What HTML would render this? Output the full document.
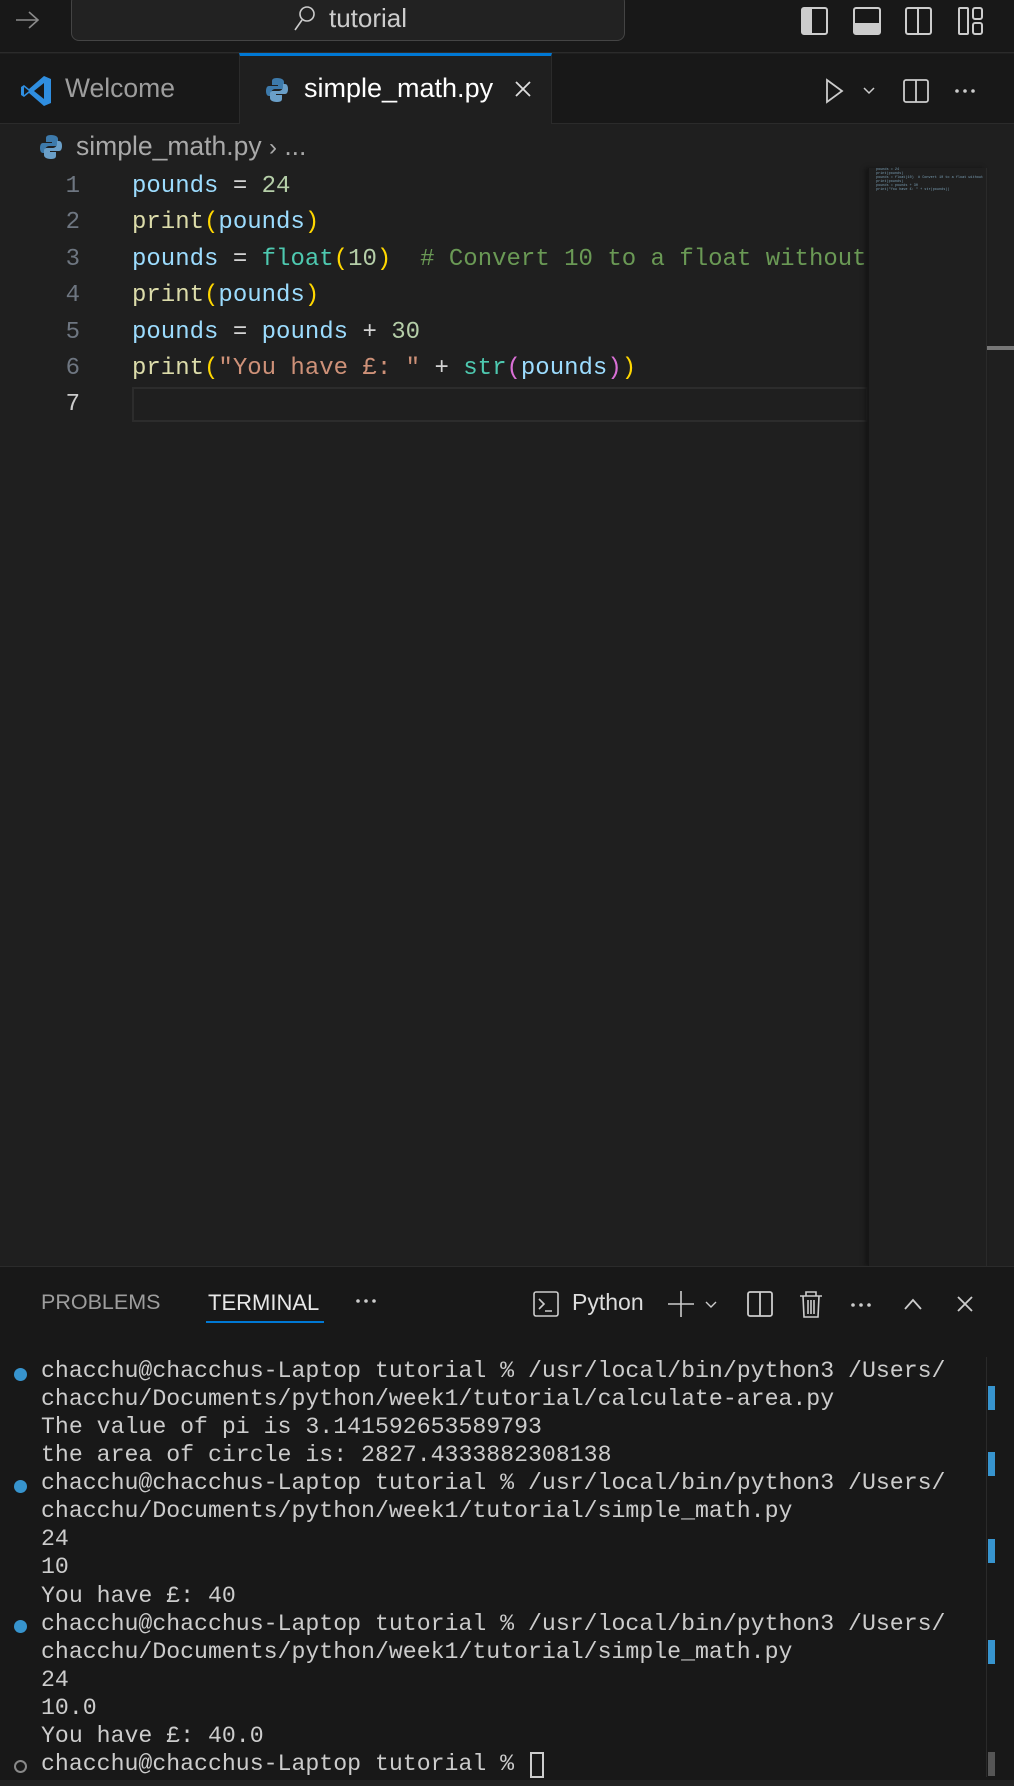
<!DOCTYPE html>
<html><head><meta charset="utf-8"><style>
*{margin:0;padding:0;box-sizing:border-box}
body{width:1014px;height:1786px;background:#1f1f1f;overflow:hidden;position:relative;font-family:"Liberation Sans",sans-serif;color:#ccc}
.abs{position:absolute}
.mono{font-family:"Liberation Mono",monospace}
.code{position:absolute;left:132px;font-size:24px;line-height:36.4px;white-space:pre;color:#9cdcfe}
.ln{position:absolute;left:40px;width:40px;text-align:right;font-size:24px;line-height:36.4px;color:#6e7681}
.v{color:#9cdcfe}.f{color:#dcdcaa}.n{color:#b5cea8}.c{color:#6a9955}.s{color:#ce9178}.b{color:#4ec9b0}.p1{color:#ffd700}.p2{color:#da70d6}.w{color:#d4d4d4}
.term{position:absolute;left:41px;top:1357px;font-size:23.2px;line-height:28.07px;white-space:pre;color:#cccccc}
.dot{position:absolute;left:14px;width:13px;height:13px;border-radius:50%;background:#3794ce}
</style></head><body>
<!-- title bar -->
<div class="abs" style="left:0;top:0;width:1014px;height:53px;background:#181818;border-bottom:1px solid #2b2b2b"></div>
<svg class="abs" style="left:14px;top:8px" width="28" height="24" viewBox="0 0 28 24"><path d="M2 12h22M15 4l9 8-9 8" stroke="#8a8a8a" stroke-width="1.6" fill="none"/></svg>
<div class="abs" style="left:71px;top:-6px;width:554px;height:47px;border:1.5px solid #444;border-radius:8px;background:#222"></div>
<svg class="abs" style="left:292px;top:4px" width="26" height="28" viewBox="0 0 26 28"><circle cx="15" cy="10" r="7" stroke="#ccc" stroke-width="1.6" fill="none"/><path d="M10 16 3 26" stroke="#ccc" stroke-width="1.6"/></svg>
<div class="abs" style="left:329px;top:3px;font-size:26px;color:#ccc">tutorial</div>
<svg class="abs" style="left:800px;top:6px" width="200" height="30" viewBox="0 0 200 30">
<rect x="2" y="2" width="25" height="26" rx="2" stroke="#ccc" stroke-width="2" fill="none"/><rect x="2" y="2" width="10" height="26" fill="#ccc"/>
<rect x="54" y="2" width="26" height="26" rx="2" stroke="#ccc" stroke-width="2" fill="none"/><rect x="54" y="17" width="26" height="11" fill="#ccc"/>
<rect x="106" y="2" width="25" height="26" rx="2" stroke="#ccc" stroke-width="2" fill="none"/><path d="M118 2v26" stroke="#ccc" stroke-width="2"/>
<rect x="159" y="2" width="9" height="26" rx="1" stroke="#ccc" stroke-width="2" fill="none"/><rect x="173" y="2" width="9" height="11" rx="2" stroke="#ccc" stroke-width="2" fill="none"/><rect x="173" y="17" width="9" height="11" rx="2" stroke="#ccc" stroke-width="2" fill="none"/>
</svg>
<!-- tabs -->
<div class="abs" style="left:0;top:54px;width:1014px;height:70px;background:#181818;border-bottom:1px solid #2b2b2b"></div>
<div class="abs" style="left:239px;top:53px;width:313px;height:71px;background:#1f1f1f;border-top:3px solid #0078d4;border-left:1px solid #2b2b2b;border-right:1px solid #2b2b2b"></div>
<svg class="abs" style="left:20px;top:74px" width="34" height="34" viewBox="0 0 34 34"><path d="M24 2 31 5v24l-7 3L9 19l-5 4-3-2V13l3-2 5 4z" fill="#2f8ee0"/><path d="M24 9v16l-10-8z" fill="#181818"/><path d="M4 13l5 4-5 4z" fill="#181818"/></svg>
<div class="abs" style="left:65px;top:73px;font-size:26.5px;color:#9d9d9d">Welcome</div>
<svg class="abs" style="left:266px;top:77px" width="22" height="26" viewBox="0 0 22 26"><path d="M11 1c-5 0-5 2-5 4v3h6v1H3c-2 0-3 2-3 5s1 5 3 5h2v-3c0-2 2-4 4-4h6c2 0 3-1 3-3V5c0-2-2-4-7-4z" fill="#3d7aab"/><path d="M11 25c5 0 5-2 5-4v-3h-6v-1h9c2 0 3-2 3-5s-1-5-3-5h-2v3c0 2-2 4-4 4H7c-2 0-3 1-3 3v4c0 2 2 4 7 4z" fill="#6a9fc8"/></svg>
<div class="abs" style="left:304px;top:73px;font-size:27px;color:#fff">simple_math.py</div>
<svg class="abs" style="left:513px;top:79px" width="20" height="20" viewBox="0 0 20 20"><path d="M3 3l14 14M17 3 3 17" stroke="#ddd" stroke-width="1.8"/></svg>
<svg class="abs" style="left:820px;top:76px" width="190" height="30" viewBox="0 0 190 30">
<path d="M7 4 22 15 7 26z" stroke="#ccc" stroke-width="1.8" fill="none"/><path d="M44 12l5 5 5-5" stroke="#ccc" stroke-width="1.5" fill="none"/>
<rect x="84" y="4" width="24" height="22" rx="2" stroke="#ccc" stroke-width="1.8" fill="none"/><path d="M96 4v22" stroke="#ccc" stroke-width="1.8"/>
<circle cx="137" cy="15" r="1.8" fill="#ccc"/><circle cx="145" cy="15" r="1.8" fill="#ccc"/><circle cx="153" cy="15" r="1.8" fill="#ccc"/></svg>
<!-- breadcrumb -->
<svg class="abs" style="left:40px;top:134px" width="22" height="26" viewBox="0 0 22 26"><path d="M11 1c-5 0-5 2-5 4v3h6v1H3c-2 0-3 2-3 5s1 5 3 5h2v-3c0-2 2-4 4-4h6c2 0 3-1 3-3V5c0-2-2-4-7-4z" fill="#3d7aab"/><path d="M11 25c5 0 5-2 5-4v-3h-6v-1h9c2 0 3-2 3-5s-1-5-3-5h-2v3c0 2-2 4-4 4H7c-2 0-3 1-3 3v4c0 2 2 4 7 4z" fill="#6a9fc8"/></svg>
<div class="abs" style="left:76px;top:131px;font-size:26.5px;color:#a9a9a9">simple_math.py <span style="font-size:24px">›</span> ...</div>
<!-- code -->
<div class="abs" style="left:132px;top:387px;width:736px;height:35px;border:2px solid #2c2c2c"></div>
<div class="ln mono" style="top:169px">1<br>2<br>3<br>4<br>5<br>6<br><span style="color:#ccc">7</span></div>
<div class="code mono" style="top:169px"><span class="v">pounds</span> <span class="w">=</span> <span class="n">24</span>
<span class="f">print</span><span class="p1">(</span><span class="v">pounds</span><span class="p1">)</span>
<span class="v">pounds</span> <span class="w">=</span> <span class="b">float</span><span class="p1">(</span><span class="n">10</span><span class="p1">)</span>  <span class="c"># Convert 10 to a float without</span>
<span class="f">print</span><span class="p1">(</span><span class="v">pounds</span><span class="p1">)</span>
<span class="v">pounds</span> <span class="w">=</span> <span class="v">pounds</span> <span class="w">+</span> <span class="n">30</span>
<span class="f">print</span><span class="p1">(</span><span class="s">"You have £: "</span> <span class="w">+</span> <span class="b">str</span><span class="p2">(</span><span class="v">pounds</span><span class="p2">)</span><span class="p1">)</span></div>
<!-- minimap -->
<div class="abs" style="left:868px;top:168px;width:118px;height:1098px;background:#1f1f1f;border-left:1px solid #161616;box-shadow:-3px 0 4px #151515"></div>
<div class="abs mono" style="left:876px;top:168px;font-size:3.5px;line-height:4px;white-space:pre;color:#7a9fb5">pounds = 24
print(pounds)
pounds = float(10)  # Convert 10 to a float without
print(pounds)
pounds = pounds + 30
print("You have £: " + str(pounds))</div>
<div class="abs" style="left:986px;top:168px;width:28px;height:1098px;border-left:1px solid #2a2a2a"></div>
<div class="abs" style="left:987px;top:346px;width:27px;height:4px;background:#777"></div>
<!-- panel -->
<div class="abs" style="left:0;top:1266px;width:1014px;height:520px;background:#181818;border-top:1px solid #2b2b2b"></div>
<div class="abs" style="left:41px;top:1290px;font-size:21.5px;color:#9d9d9d">PROBLEMS</div>
<div class="abs" style="left:208px;top:1290px;font-size:22px;color:#e7e7e7">TERMINAL</div>
<div class="abs" style="left:206px;top:1321px;width:118px;height:2px;background:#0078d4"></div>
<svg class="abs" style="left:354px;top:1296px" width="30" height="10" viewBox="0 0 30 10"><circle cx="4" cy="5" r="1.8" fill="#ccc"/><circle cx="12" cy="5" r="1.8" fill="#ccc"/><circle cx="20" cy="5" r="1.8" fill="#ccc"/></svg>
<svg class="abs" style="left:532px;top:1290px" width="28" height="28" viewBox="0 0 28 28"><rect x="2" y="2" width="24" height="24" rx="2" stroke="#ccc" stroke-width="1.6" fill="none"/><path d="M7 9l5 5-5 5M13 21h7" stroke="#ccc" stroke-width="1.6" fill="none"/></svg>
<div class="abs" style="left:572px;top:1289px;font-size:23px;color:#ddd">Python</div>
<svg class="abs" style="left:664px;top:1288px" width="360" height="32" viewBox="0 0 360 32">
<path d="M17 3v26M4 16h26" stroke="#ccc" stroke-width="1.6"/><path d="M42 14l5 5 5-5" stroke="#ccc" stroke-width="1.4" fill="none"/>
<rect x="84" y="4" width="24" height="24" rx="2" stroke="#ccc" stroke-width="1.8" fill="none"/><path d="M96 4v24" stroke="#ccc" stroke-width="1.8"/>
<path d="M136 8h22M142 8V4h10v4M139 8l1 21h14l1-21M144 12v14M147 12v14M150 12v14" stroke="#ccc" stroke-width="1.6" fill="none"/>
<circle cx="189" cy="17" r="1.8" fill="#ccc"/><circle cx="197" cy="17" r="1.8" fill="#ccc"/><circle cx="205" cy="17" r="1.8" fill="#ccc"/>
<path d="M241 21l8-9 8 9" stroke="#ccc" stroke-width="1.8" fill="none"/>
<path d="M294 9l14 14M308 9l-14 14" stroke="#ccc" stroke-width="1.8"/></svg>
<div class="dot" style="top:1368px"></div>
<div class="dot" style="top:1480px"></div>
<div class="dot" style="top:1620px"></div>
<div class="abs" style="left:14px;top:1760px;width:13px;height:13px;border-radius:50%;border:2px solid #888"></div>
<div class="term mono">chacchu@chacchus-Laptop tutorial % /usr/local/bin/python3 /Users/
chacchu/Documents/python/week1/tutorial/calculate-area.py
The value of pi is 3.141592653589793
the area of circle is: 2827.4333882308138
chacchu@chacchus-Laptop tutorial % /usr/local/bin/python3 /Users/
chacchu/Documents/python/week1/tutorial/simple_math.py
24
10
You have £: 40
chacchu@chacchus-Laptop tutorial % /usr/local/bin/python3 /Users/
chacchu/Documents/python/week1/tutorial/simple_math.py
24
10.0
You have £: 40.0
chacchu@chacchus-Laptop tutorial % </div>
<div class="abs" style="left:530px;top:1752px;width:14px;height:26px;border:2px solid #ccc"></div>
<div class="abs" style="left:986px;top:1357px;width:28px;height:420px;border-left:1px solid #2a2a2a"></div>
<div class="abs" style="left:988px;top:1386px;width:7px;height:24px;background:#3794ce"></div>
<div class="abs" style="left:988px;top:1452px;width:7px;height:24px;background:#3794ce"></div>
<div class="abs" style="left:988px;top:1539px;width:7px;height:24px;background:#3794ce"></div>
<div class="abs" style="left:988px;top:1640px;width:7px;height:24px;background:#3794ce"></div>
<div class="abs" style="left:988px;top:1752px;width:7px;height:24px;background:#555"></div>
<div class="abs" style="left:0;top:1780px;width:1014px;height:6px;background:#222"></div>
</body></html>
